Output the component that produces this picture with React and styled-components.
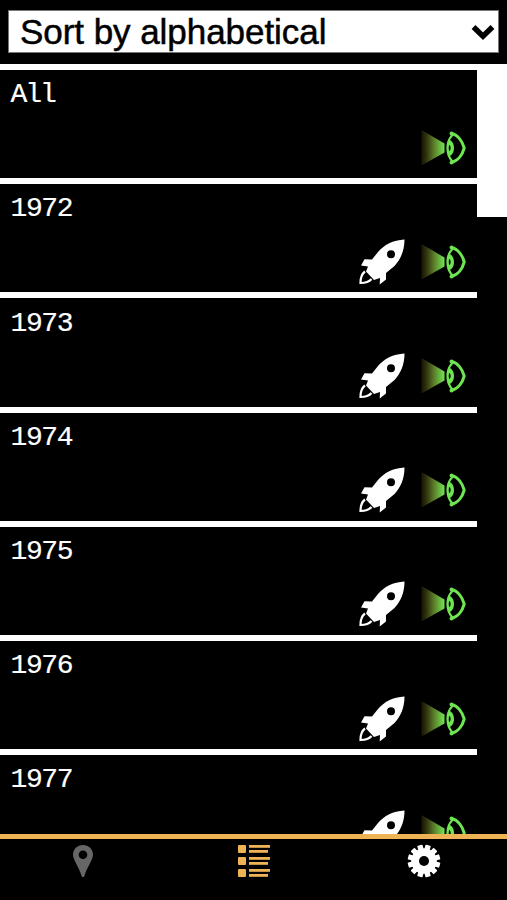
import React from 'react'
import styled, { createGlobalStyle } from 'styled-components'

const GlobalStyle = createGlobalStyle`
    * { box-sizing: border-box; }
    body {
        margin: 0;
        background: #000;
        overflow: hidden;
    }
`

const Screen = styled.main`
    display: flex;
    flex-direction: column;
    height: 100vh;
    background: #000;
    color: #fff;
`

const Toolbar = styled.header`
    flex: none;
    height: 64px;
    padding: 10px 8px 11px;
`

const SortButton = styled.button`
    display: flex;
    align-items: center;
    justify-content: space-between;
    width: 100%;
    height: 43px;
    padding: 0 3px 0 11px;
    border: 1px solid #777;
    border-radius: 0;
    background: #fff;
    color: #000;
    font: 35px/40px "Liberation Sans", Arial, sans-serif;
    letter-spacing: -0.05px;
    -webkit-text-stroke: 0.5px #000;
    white-space: nowrap;
`

const Content = styled.section`
    display: flex;
    flex: 1;
    min-height: 0;
`

const List = styled.ul`
    flex: 1;
    margin: 0;
    padding: 0;
    overflow: hidden;
    list-style: none;
`

const Row = styled.li`
    display: flex;
    flex-direction: column;
    justify-content: space-between;
    height: 114.2px;
    padding: 8.3px 11px 6.5px 10.5px;
    border-top: 6px solid #fff;
`

const Year = styled.span`
    font: 28px/34px "Liberation Mono", "Courier New", monospace;
    letter-spacing: ${ props => props.tight ? '-2px' : '-1.4px' };
    -webkit-text-stroke: 0.2px #fff;
`

const RowActions = styled.div`
    display: flex;
    justify-content: flex-end;
    gap: 14px;
    height: 48px;
`

const ScrollTrack = styled.div`
    width: 30px;
    background: #000;
`

const ScrollThumb = styled.div`
    height: 153px;
    background: #fff;
`

const TabBar = styled.nav`
    display: grid;
    flex: none;
    grid-template-columns: 166px 175px 166px;
    height: 66px;
    padding-top: 4px;
    border-top: 5px solid #eeb355;
`

const Tab = styled.button`
    display: flex;
    justify-content: center;
    align-items: flex-start;
    padding: 0;
    border: 0;
    background: none;
    color: ${ props => props.tint };
`

const Chevron = () => (
    <svg width="24" height="18" viewBox="0 0 24 18" fill="none" stroke="#000" strokeWidth="5.5">
        <path d="M2.500 4 12 13.200l9.500-9.200" />
    </svg>
)

const RocketIcon = () => (
    <svg width="48" height="48" viewBox="0 0 48 48">
        <path fill="#fff" fillRule="evenodd" d="M46.500 1.500C35 2 26 7 20 14l-6 7.500-7.500-.2L3 27.500l7 1-2 5 8 8.500 6-2-.3 6.500 6.300-5V35l8.500-7C42.500 21.500 46.500 13 46.500 1.500zM33 12.200a4 4 0 1 1 0 8 4 4 0 0 1 0-8z" />
        <path fill="none" stroke="#fff" strokeWidth="2.200" d="M7 33.500c-4 3-4.500 6.500-4.500 11.500 5 0 8.500-1 11-4" />
    </svg>
)

const EyeIcon = () => (
    <svg width="46" height="48" viewBox="0 0 46 48">
        <defs>
            <linearGradient id="beam">
                <stop offset="0" stopColor="#332b08" stopOpacity="0.5" />
                <stop offset="0.5" stopColor="#587326" />
                <stop offset="1" stopColor="#72e552" />
            </linearGradient>
        </defs>
        <path fill="url(#beam)" d="M1.500 6 24.500 19.500v9L1.500 41.500z" />
        <g fill="none" stroke="#70e553" strokeWidth="3" strokeLinecap="round">
            <path d="M31.500 9.500C38 11 42.500 17.500 44.200 24 42.500 30.500 38 37 31.500 38.500" strokeLinejoin="round" />
            <path d="M32 11.500c-3 3-4.500 7-4.500 12.500s1.500 9.500 4.500 13" strokeWidth="2.200" />
            <circle cx="31.500" cy="9.500" r="0.5" />
            <circle cx="31.500" cy="38.500" r="0.5" />
        </g>
        <path fill="#70e553" fillRule="evenodd" d="M28.500 15.500c4 1 5.500 5 5.500 8.500s-1.500 7.500-5.500 8.500c-2-4-2-13 0-17zm1 5.500c-1.500 1-1.500 5 0 6 1.500-1 1.500-5 0-6z" />
    </svg>
)

const PinIcon = () => (
    <svg width="22" height="35" viewBox="0 0 22 35">
        <path fill="currentColor" fillRule="evenodd" d="M11 2c5.800 0 10 4.300 10 9.700 0 5-5 10-9 22.300h-2C6 21.700 1 16.700 1 11.700 1 6.300 5.200 2 11 2zm0 5.500a4.300 4.300 0 1 0 0 8.600 4.300 4.300 0 0 0 0-8.600z" />
    </svg>
)

const ListIcon = () => (
    <svg width="34" height="36" viewBox="0 0 34 36" fill="currentColor">
        { [2, 14, 26].map(y => (
            <g key={ y }>
                <rect x="1" y={ y } width="8" height="8" rx="1" />
                <rect x="12" y={ y } width="21" height="2.800" />
                <rect x="12" y={ y + 5 } width="19" height="2.800" />
            </g>
        )) }
    </svg>
)

const GearIcon = () => (
    <svg width="34" height="36" viewBox="-17 -18 34 36">
        <g fill="currentColor">
            { [15, 45, 75, 105, 135, 165].map(angle => (
                <rect key={ angle } x="-2.700" y="-16.300" width="5.400" height="32.600" rx="0.8" transform={ `rotate(${ angle })` } />
            )) }
            <circle r="12.800" />
        </g>
        <circle r="5" fill="#000" />
    </svg>
)

const years = ['All', '1972', '1973', '1974', '1975', '1976', '1977']

const App = () => (
    <Screen>
        <GlobalStyle />
        <Toolbar>
            <SortButton>
                Sort by alphabetical
                <Chevron />
            </SortButton>
        </Toolbar>
        <Content>
            <List>
                {
                    years.map(year => (
                        <Row key={ year }>
                            <Year tight={ year === 'All' }>{ year }</Year>
                            <RowActions>
                                { year !== 'All' && <RocketIcon /> }
                                <EyeIcon />
                            </RowActions>
                        </Row>
                    ))
                }
            </List>
            <ScrollTrack>
                <ScrollThumb />
            </ScrollTrack>
        </Content>
        <TabBar>
            <Tab tint="#666"><PinIcon /></Tab>
            <Tab tint="#eeb355"><ListIcon /></Tab>
            <Tab tint="#fff"><GearIcon /></Tab>
        </TabBar>
    </Screen>
)

export default App
